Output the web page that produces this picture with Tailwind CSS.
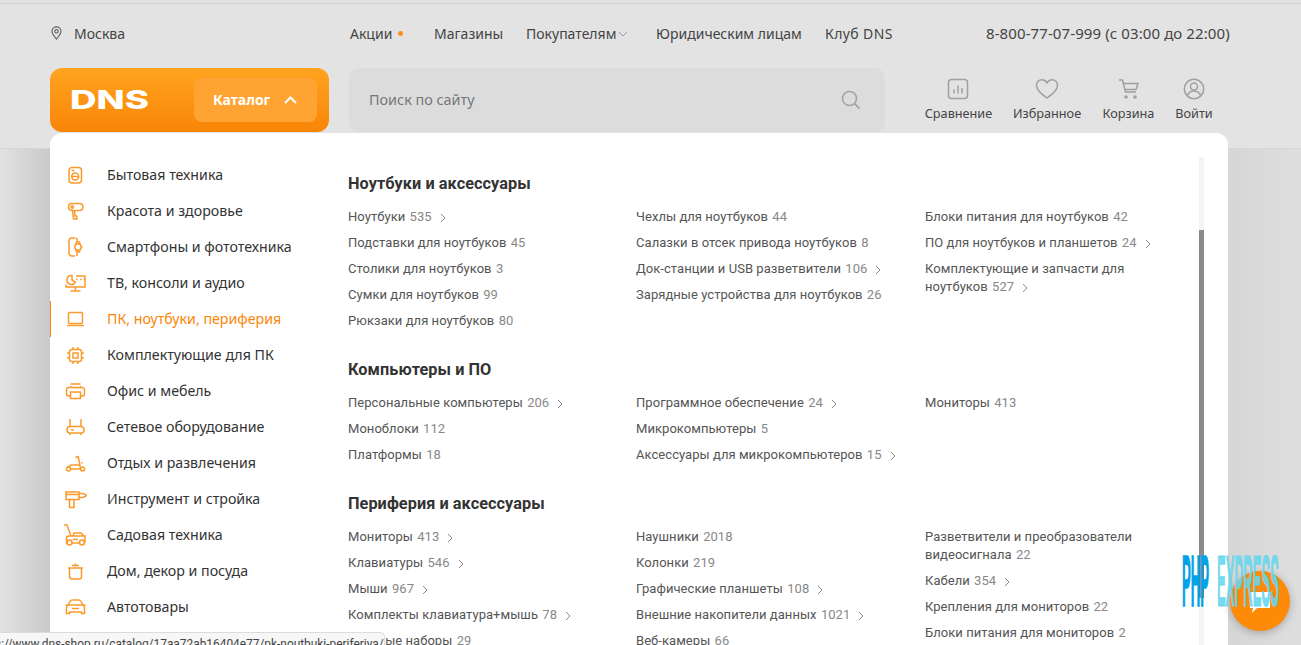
<!DOCTYPE html>
<html lang="ru">
<head>
<meta charset="utf-8" />
<title>DNS</title>
<script src="https://cdn.jsdelivr.net/npm/@tailwindcss/browser@4"></script>
</head>
<body class="font-['Noto_Sans',sans-serif] text-[14px]">
<div class="relative h-[645px] w-[1301px] overflow-hidden bg-[linear-gradient(90deg,#e2e2e2_0,#c9c9c9_50px,#d6d6d6_1228px,#dddddd_1290px)]">

  <!-- header -->
  <header class="h-[149px] border-b border-[#d6d6d6] bg-[#e3e3e3] pl-[50px] pt-[3px]">
    <div class="h-[1px] -ml-[50px] bg-[#cfcfcf]"></div>
    <div class="flex h-10 items-center mt-[9px] text-[#444]">
      <div class="flex w-[300px] items-center">
        <svg class="ml-[1px] h-[14px] w-[11px]" viewBox="0 0 11 14" fill="none" stroke="#666" stroke-width="1.2"><path d="M5.5 13C3 10.2 1 8 1 5.3a4.5 4.5 0 0 1 9 0C10 8 8 10.2 5.5 13z"/><circle cx="5.5" cy="5.3" r="1.7"/></svg>
        <span class="ml-[12px]">Москва</span>
      </div>
      <div class="flex w-[84px] items-center">Акции<span class="ml-[6px] h-[5px] w-[5px] rounded-full bg-[#f7931e]"></span></div>
      <div class="w-[92px]">Магазины</div>
      <div class="flex w-[130px] items-center">Покупателям<svg class="ml-[2px] mt-[2px] h-[6px] w-[10px]" viewBox="0 0 10 6" fill="none" stroke="#999" stroke-width="1"><path d="M1 1l4 4 4-4"/></svg></div>
      <div class="w-[169px]">Юридическим лицам</div>
      <div class="w-[161px] tracking-[0.4px]">Клуб DNS</div>
      <div class="w-[244px] whitespace-nowrap text-[15px] tracking-[0.1px]">8-800-77-07-999 (с 03:00 до 22:00)</div>
    </div>
    <div class="mt-[15px] flex h-[64px]">
      <div class="flex w-[279px] items-center rounded-xl bg-[linear-gradient(180deg,#ffa51f,#f98507)]">
        <svg class="ml-[20px] h-[20px] w-[80px]" viewBox="0 0 80 20"><text x="0" y="19" textLength="79" lengthAdjust="spacingAndGlyphs" fill="#fff" font-family="Inter" font-weight="800" font-size="26">DNS</text></svg>
        <div class="ml-[44px] flex h-[44px] w-[123px] items-center rounded-lg bg-[#ffa433] pl-[19px] text-[14px] font-bold text-white"><span class="-mt-[2px]">Каталог</span><svg class="ml-[14px] h-[8px] w-[13px]" viewBox="0 0 13 8" fill="none" stroke="#fff" stroke-width="2"><path d="M1 7l5.5-5.5L12 7"/></svg></div>
      </div>
      <div class="ml-[20px] flex w-[536px] items-center justify-between rounded-[10px] bg-[#dcdcdc] pl-[20px] pr-[24px] text-[14.4px] text-[#777]">
        <span>Поиск по сайту</span>
        <svg class="h-[20px] w-[20px]" viewBox="0 0 20 20" fill="none" stroke="#a3a3a3" stroke-width="1.6"><circle cx="8.5" cy="8.5" r="7"/><path d="M13.6 13.6l5 5"/></svg>
      </div>
      <div class="ml-[40px] flex pt-[10px] text-[12.7px] text-[#444]">
        <div class="flex w-[67px] flex-col items-center">
          <svg class="h-[22px] w-[22px] -ml-[2px]" viewBox="0 0 22 22" fill="none" stroke="#a0a0a0" stroke-width="1.5"><rect x="1.5" y="1.5" width="19" height="19" rx="3"/><path d="M7 11.5v4M11 7.5v8M15 10v5.500"/></svg>
          <span class="mt-[4px] whitespace-nowrap">Сравнение</span>
        </div>
        <div class="ml-[21px] flex w-[68px] flex-col items-center">
          <svg class="h-[22px] w-[24px]" viewBox="0 0 24 22" fill="none" stroke="#a0a0a0" stroke-width="1.5"><path d="M12 20C6 15.500 1.500 12 1.500 7.200 1.500 4 4 1.800 6.800 1.800c2.200 0 4 1 5.200 3 1.200-2 3-3 5.200-3 2.800 0 5.300 2.200 5.300 5.400C22.500 12 18 15.500 12 20z"/></svg>
          <span class="mt-[4px] whitespace-nowrap">Избранное</span>
        </div>
        <div class="ml-[22px] flex w-[51px] flex-col items-center">
          <svg class="h-[22px] w-[22px]" viewBox="0 0 22 22" fill="none" stroke="#a0a0a0" stroke-width="1.500"><path d="M1 2h3.500l3 12h10.500M5.500 5.500H20l-2 6H7"/><circle cx="8" cy="19" r="1" fill="#a0a0a0"/><circle cx="17" cy="19" r="1" fill="#a0a0a0"/></svg>
          <span class="mt-[4px] whitespace-nowrap">Корзина</span>
        </div>
        <div class="ml-[22px] flex w-[36px] flex-col items-center">
          <svg class="h-[22px] w-[22px]" viewBox="0 0 22 22" fill="none" stroke="#a0a0a0" stroke-width="1.500"><circle cx="11" cy="11" r="9.700"/><circle cx="11" cy="8.500" r="3.500"/><path d="M4.500 17.500c1-3 3.500-4.500 6.500-4.500s5.500 1.500 6.500 4.500"/></svg>
          <span class="mt-[4px] whitespace-nowrap">Войти</span>
        </div>
      </div>
    </div>
  </header>

  <!-- dropdown catalog -->
  <div class="absolute left-[50px] top-[133px] flex h-[560px] w-[1178px] rounded-t-[12px] bg-white">
    <nav class="w-[298px] pt-[24px] text-[14.2px] text-[#333]">
      <a class="flex h-9 items-center"><svg class="ml-[13px] h-6 w-6" viewBox="0 0 24 24" fill="none" stroke="#fb9a2c" stroke-width="1.500"><rect x="6" y="4.500" width="12.500" height="15.500" rx="3"/><circle cx="12.200" cy="13.500" r="3.500"/><path d="M9 13.500h6.500M8.500 7.500h3"/></svg><span class="ml-[20px]">Бытовая техника</span></a>
      <a class="flex h-9 items-center"><svg class="ml-[13px] h-6 w-6" viewBox="0 0 24 24" fill="none" stroke="#fb9a2c" stroke-width="1.500"><path d="M9 4.500h7c2.500 0 4 1.500 4 3.500s-1.500 3.500-4 3.500H9.500C7 11.500 5.500 10 5.500 8S7 4.500 9 4.500z"/><circle cx="9.300" cy="8" r="1.200"/><path d="M9.500 11.500l1 8.500h3.500l-.5-3h-1.500l-.500-5.500"/></svg><span class="ml-[20px]">Красота и здоровье</span></a>
      <a class="flex h-9 items-center"><svg class="ml-[13px] h-6 w-6" viewBox="0 0 24 24" fill="none" stroke="#fb9a2c" stroke-width="1.500"><path d="M12 21H9a3 3 0 0 1-3-3V6a3 3 0 0 1 3-3h3.500M14 6.500V3M14 21v-3.500"/><circle cx="15" cy="12" r="3.200"/><path d="M13 8.800l.5-1.800h3l.5 1.800M13 15.200l.5 1.800h3l.5-1.800M18.500 12h1"/></svg><span class="ml-[20px]">Смартфоны и фототехника</span></a>
      <a class="flex h-9 items-center"><svg class="ml-[13px] h-6 w-6" viewBox="0 0 24 24" fill="none" stroke="#fb9a2c" stroke-width="1.500"><path d="M9 4.500A4.500 4.500 0 1 0 12.500 11L9 9zM13 5h9v11H3v-2.500M13 8.500h1.500M17 8.500h1.500M20.500 8.500h1M12.500 16v3.500M7.500 20h10"/></svg><span class="ml-[20px]">ТВ, консоли и аудио</span></a>
      <a class="relative flex h-9 items-center text-[#fc8507]"><span class="absolute left-0 top-0 h-9 w-px bg-[#fc8507]"></span><svg class="ml-[13px] h-6 w-6" viewBox="0 0 24 24" fill="none" stroke="#fb9a2c" stroke-width="1.500"><rect x="5.500" y="5.500" width="14" height="11" rx="1"/><path d="M4 18.500h17"/></svg><span class="ml-[20px]">ПК, ноутбуки, периферия</span></a>
      <a class="flex h-9 items-center"><svg class="ml-[13px] h-6 w-6" viewBox="0 0 24 24" fill="none" stroke="#fb9a2c" stroke-width="1.500"><rect x="6.500" y="6.500" width="12" height="12" rx="2.500"/><rect x="10" y="10" width="5" height="5"/><path d="M10 4v2.500M15 4v2.500M10 18.500V21M15 18.500V21M4 10h2.500M4 15h2.500M18.500 10H21M18.500 15H21"/></svg><span class="ml-[20px]">Комплектующие для ПК</span></a>
      <a class="flex h-9 items-center"><svg class="ml-[13px] h-6 w-6" viewBox="0 0 24 24" fill="none" stroke="#fb9a2c" stroke-width="1.500"><path d="M7.500 5h10M7.500 8.500V7M17.500 8.500V7M7 17H6a2.500 2.500 0 0 1-2.500-2.500v-3.500A2.500 2.500 0 0 1 6 8.500h13a2.500 2.500 0 0 1 2.500 2.500v3.500A2.500 2.500 0 0 1 19 17h-1"/><rect x="7.500" y="13" width="10" height="6.500"/></svg><span class="ml-[20px]">Офис и мебель</span></a>
      <a class="flex h-9 items-center"><svg class="ml-[13px] h-6 w-6" viewBox="0 0 24 24" fill="none" stroke="#fb9a2c" stroke-width="1.500"><rect x="4" y="11.500" width="17" height="6.500" rx="3"/><path d="M7 11.500V4M18 11.500V4M8 15h3M7 18v2M18 18v2"/></svg><span class="ml-[20px]">Сетевое оборудование</span></a>
      <a class="flex h-9 items-center"><svg class="ml-[13px] h-6 w-6" viewBox="0 0 24 24" fill="none" stroke="#fb9a2c" stroke-width="1.500"><circle cx="5.500" cy="18" r="2"/><circle cx="19.500" cy="18" r="2"/><path d="M7.500 18h10l-1.500-9-1-3.500-2.500 1M4.500 16l4-2h8M19 11v1.500"/></svg><span class="ml-[20px]">Отдых и развлечения</span></a>
      <a class="flex h-9 items-center"><svg class="ml-[13px] h-6 w-6" viewBox="0 0 24 24" fill="none" stroke="#fb9a2c" stroke-width="1.500"><path d="M3 5h13v7.500H3zM16 6.500h4l4 2-4 2h-4M6.500 12.500v8h4.500v-8M3 7.500h13"/></svg><span class="ml-[20px]">Инструмент и стройка</span></a>
      <a class="flex h-9 items-center"><svg class="ml-[13px] h-6 w-6" viewBox="0 0 24 24" fill="none" stroke="#fb9a2c" stroke-width="1.500"><path d="M1 2h3l4 11M5 20H3.500v-4.500c0-1.500 1-2.500 2.500-2.500h16v5.500c0 1-.500 1.500-1.500 1.500M9 20h8M10 13l1-3h7l3 3M10 16.500h5"/><circle cx="6.500" cy="19.500" r="2.500"/><circle cx="19" cy="19.500" r="2.500"/></svg><span class="ml-[20px]">Садовая техника</span></a>
      <a class="flex h-9 items-center"><svg class="ml-[13px] h-6 w-6" viewBox="0 0 24 24" fill="none" stroke="#fb9a2c" stroke-width="1.500"><path d="M5 9h15M6.500 9v8.500a2.500 2.500 0 0 0 2.500 2.500h7a2.500 2.500 0 0 0 2.500-2.500V9M9 6.500h7M12.500 6.500V4.500"/></svg><span class="ml-[20px]">Дом, декор и посуда</span></a>
      <a class="flex h-9 items-center"><svg class="ml-[13px] h-6 w-6" viewBox="0 0 24 24" fill="none" stroke="#fb9a2c" stroke-width="1.500"><path d="M5 10l2-3.500c.5-1 1.500-1.500 2.500-1.500h6c1 0 2 .5 2.500 1.500l2 3.500M2.500 10H6M19 10h3.500M5 10c-1 1-1.500 2-1.500 3v5.500h3V17h12v1.500h3V13c0-1-.500-2-1.500-3zM9 13.500h7M9 10h7"/></svg><span class="ml-[20px]">Автотовары</span></a>
    </nav>

    <div class="w-[850px] pt-[38px] font-['Roboto',sans-serif] text-[13px] tracking-[0.05px] text-[#555]">
      <section class="mb-[23px]">
        <h2 class="mb-[9px] h-6 text-[16.3px] font-bold leading-[26px] text-[#333]">Ноутбуки и аксессуары</h2>
        <div class="grid grid-cols-[288px_289px_1fr]">
          <div>
            <a class="block py-1 leading-[18px]">Ноутбуки <span class="ml-[1px] text-[#888]">535</span><svg class="ml-[8px] inline h-[10px] w-[6px]" viewBox="0 0 6 10" fill="none" stroke="#888"><path d="M1 1l4 4-4 4"/></svg></a>
            <a class="block py-1 leading-[18px]">Подставки для ноутбуков <span class="ml-[1px] text-[#888]">45</span></a>
            <a class="block py-1 leading-[18px]">Столики для ноутбуков <span class="ml-[1px] text-[#888]">3</span></a>
            <a class="block py-1 leading-[18px]">Сумки для ноутбуков <span class="ml-[1px] text-[#888]">99</span></a>
            <a class="block py-1 leading-[18px]">Рюкзаки для ноутбуков <span class="ml-[1px] text-[#888]">80</span></a>
          </div>
          <div>
            <a class="block py-1 leading-[18px]">Чехлы для ноутбуков <span class="ml-[1px] text-[#888]">44</span></a>
            <a class="block py-1 leading-[18px]">Салазки в отсек привода ноутбуков <span class="ml-[1px] text-[#888]">8</span></a>
            <a class="block py-1 leading-[18px]">Док-станции и USB разветвители <span class="ml-[1px] text-[#888]">106</span><svg class="ml-[8px] inline h-[10px] w-[6px]" viewBox="0 0 6 10" fill="none" stroke="#888"><path d="M1 1l4 4-4 4"/></svg></a>
            <a class="block py-1 leading-[18px]">Зарядные устройства для ноутбуков <span class="ml-[1px] text-[#888]">26</span></a>
          </div>
          <div class="w-[225px]">
            <a class="block py-1 leading-[18px] whitespace-nowrap">Блоки питания для ноутбуков <span class="ml-[1px] text-[#888]">42</span></a>
            <a class="block py-1 leading-[18px] whitespace-nowrap">ПО для ноутбуков и планшетов <span class="ml-[1px] text-[#888]">24</span><svg class="ml-[8px] inline h-[10px] w-[6px]" viewBox="0 0 6 10" fill="none" stroke="#888"><path d="M1 1l4 4-4 4"/></svg></a>
            <a class="block py-1 leading-[18px]">Комплектующие и запчасти для ноутбуков <span class="ml-[1px] text-[#888]">527</span><svg class="ml-[8px] inline h-[10px] w-[6px]" viewBox="0 0 6 10" fill="none" stroke="#888"><path d="M1 1l4 4-4 4"/></svg></a>
          </div>
        </div>
      </section>
      <section class="mb-[23px]">
        <h2 class="mb-[9px] h-6 text-[16.3px] font-bold leading-[26px] text-[#333]">Компьютеры и ПО</h2>
        <div class="grid grid-cols-[288px_289px_1fr]">
          <div>
            <a class="block py-1 leading-[18px]">Персональные компьютеры <span class="ml-[1px] text-[#888]">206</span><svg class="ml-[8px] inline h-[10px] w-[6px]" viewBox="0 0 6 10" fill="none" stroke="#888"><path d="M1 1l4 4-4 4"/></svg></a>
            <a class="block py-1 leading-[18px]">Моноблоки <span class="ml-[1px] text-[#888]">112</span></a>
            <a class="block py-1 leading-[18px]">Платформы <span class="ml-[1px] text-[#888]">18</span></a>
          </div>
          <div>
            <a class="block py-1 leading-[18px]">Программное обеспечение <span class="ml-[1px] text-[#888]">24</span><svg class="ml-[8px] inline h-[10px] w-[6px]" viewBox="0 0 6 10" fill="none" stroke="#888"><path d="M1 1l4 4-4 4"/></svg></a>
            <a class="block py-1 leading-[18px]">Микрокомпьютеры <span class="ml-[1px] text-[#888]">5</span></a>
            <a class="block py-1 leading-[18px]">Аксессуары для микрокомпьютеров <span class="ml-[1px] text-[#888]">15</span><svg class="ml-[8px] inline h-[10px] w-[6px]" viewBox="0 0 6 10" fill="none" stroke="#888"><path d="M1 1l4 4-4 4"/></svg></a>
          </div>
          <div>
            <a class="block py-1 leading-[18px]">Мониторы <span class="ml-[1px] text-[#888]">413</span></a>
          </div>
        </div>
      </section>
      <section>
        <h2 class="mb-[9px] h-6 text-[16.3px] font-bold leading-[26px] text-[#333]">Периферия и аксессуары</h2>
        <div class="grid grid-cols-[288px_289px_1fr]">
          <div>
            <a class="block py-1 leading-[18px]">Мониторы <span class="ml-[1px] text-[#888]">413</span><svg class="ml-[8px] inline h-[10px] w-[6px]" viewBox="0 0 6 10" fill="none" stroke="#888"><path d="M1 1l4 4-4 4"/></svg></a>
            <a class="block py-1 leading-[18px]">Клавиатуры <span class="ml-[1px] text-[#888]">546</span><svg class="ml-[8px] inline h-[10px] w-[6px]" viewBox="0 0 6 10" fill="none" stroke="#888"><path d="M1 1l4 4-4 4"/></svg></a>
            <a class="block py-1 leading-[18px]">Мыши <span class="ml-[1px] text-[#888]">967</span><svg class="ml-[8px] inline h-[10px] w-[6px]" viewBox="0 0 6 10" fill="none" stroke="#888"><path d="M1 1l4 4-4 4"/></svg></a>
            <a class="block py-1 leading-[18px]">Комплекты клавиатура+мышь <span class="ml-[1px] text-[#888]">78</span><svg class="ml-[8px] inline h-[10px] w-[6px]" viewBox="0 0 6 10" fill="none" stroke="#888"><path d="M1 1l4 4-4 4"/></svg></a>
            <a class="block py-1 leading-[18px]">Игровые наборы <span class="ml-[1px] text-[#888]">29</span></a>
          </div>
          <div>
            <a class="block py-1 leading-[18px]">Наушники <span class="ml-[1px] text-[#888]">2018</span></a>
            <a class="block py-1 leading-[18px]">Колонки <span class="ml-[1px] text-[#888]">219</span></a>
            <a class="block py-1 leading-[18px]">Графические планшеты <span class="ml-[1px] text-[#888]">108</span><svg class="ml-[8px] inline h-[10px] w-[6px]" viewBox="0 0 6 10" fill="none" stroke="#888"><path d="M1 1l4 4-4 4"/></svg></a>
            <a class="block py-1 leading-[18px]">Внешние накопители данных <span class="ml-[1px] text-[#888]">1021</span><svg class="ml-[8px] inline h-[10px] w-[6px]" viewBox="0 0 6 10" fill="none" stroke="#888"><path d="M1 1l4 4-4 4"/></svg></a>
            <a class="block py-1 leading-[18px]">Веб-камеры <span class="ml-[1px] text-[#888]">66</span></a>
          </div>
          <div class="w-[225px]">
            <a class="block py-1 leading-[18px]">Разветвители и преобразователи видеосигнала <span class="ml-[1px] text-[#888]">22</span></a>
            <a class="block py-1 leading-[18px]">Кабели <span class="ml-[1px] text-[#888]">354</span><svg class="ml-[8px] inline h-[10px] w-[6px]" viewBox="0 0 6 10" fill="none" stroke="#888"><path d="M1 1l4 4-4 4"/></svg></a>
            <a class="block py-1 leading-[18px] whitespace-nowrap">Крепления для мониторов <span class="ml-[1px] text-[#888]">22</span></a>
            <a class="block py-1 leading-[18px] whitespace-nowrap">Блоки питания для мониторов <span class="ml-[1px] text-[#888]">2</span></a>
          </div>
        </div>
      </section>
    </div>

    <!-- scrollbar -->
    <div class="absolute left-[1149px] top-[24px] h-[536px] w-[5px] bg-[#f4f4f4]">
      <div class="mt-[73px] h-[368px] w-[5px] bg-[#8b8b8b]"></div>
    </div>
  </div>

  <!-- chat button -->
  <div class="absolute left-[1230px] top-[571px] flex h-[60px] w-[60px] items-center justify-center rounded-full bg-[#ff8a08] shadow-[0_2px_8px_rgba(0,0,0,0.25)]">
    <svg class="mt-[2px] h-[24px] w-[24px]" viewBox="0 0 24 24" fill="#fff"><path d="M2 2h20v16H9l-5 5 1-5H2z"/></svg>
  </div>

  <!-- pip watermark -->
  <svg class="absolute left-[1181px] top-[555px] h-[52px] w-[100px]" viewBox="0 0 100 52">
    <text x="1" y="50.500" textLength="27" lengthAdjust="spacingAndGlyphs" font-family="Liberation Sans" font-weight="700" font-size="72" fill="#00a2e8" stroke="#00a2e8" stroke-width="1.600">PHP</text>
    <text x="36" y="50.500" textLength="62" lengthAdjust="spacingAndGlyphs" font-family="Liberation Sans" font-weight="700" font-size="72" fill="#66d6ec" fill-opacity="0.9" stroke="#66d6ec" stroke-opacity="0.9" stroke-width="1.200">EXPRESS</text>
  </svg>

  <!-- link status bubble -->
  <div class="absolute left-0 top-[632px] h-[20px] w-[385px] overflow-hidden rounded-tr-[5px] border-r border-t border-[#dcdcdc] bg-[#f7f7f7] text-[#444]">
    <div class="-ml-[26px] whitespace-nowrap pt-[3px] font-['Roboto',sans-serif] text-[11.9px]">https://www.dns-shop.ru/catalog/17aa72ab16404e77/pk-noutbuki-periferiya/</div>
  </div>
</div>
</body>
</html>
